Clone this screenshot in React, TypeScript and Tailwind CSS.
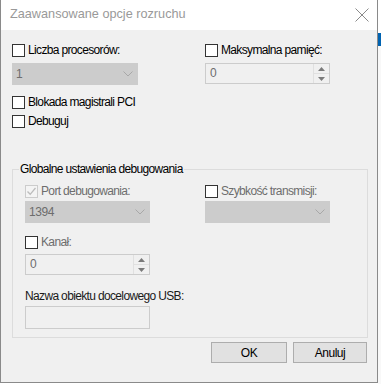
import { ReactNode } from 'react';

const font = { fontFamily: '"Liberation Sans", Arial, sans-serif' };

function Check({ label, disabled, checked }: { label: string; disabled?: boolean; checked?: boolean }) {
  return (
    <div className="flex items-center h-[14px]">
      <span
        className={`w-[13px] h-[13px] border flex items-center justify-center ${
          disabled && checked ? 'border-[#cccccc] bg-[#f4f4f4]' : 'border-[#333333] bg-white'
        }`}
      >
        {checked && (
          <svg width="11" height="11" viewBox="0 0 11 11">
            <path d="M1.5 5.5 L4.2 8.3 L9.5 2" fill="none" stroke="#bcbcbc" strokeWidth="1.3" />
          </svg>
        )}
      </span>
      <span className={`ml-[3px] text-[12px] leading-[14px] tracking-[-0.65px] ${disabled ? 'text-[#6d6d6d]' : 'text-black'}`}>
        {label}
      </span>
    </div>
  );
}

function Combo({ value, width }: { value: string; width: string }) {
  return (
    <div className={`${width} h-[22px] bg-[#cccccc] border border-[#cccccc] flex items-center justify-between pl-[3px] pr-[4px]`}>
      <span className="text-[12px] leading-[14px] tracking-[-0.4px] text-[#6d6d6d]">{value}</span>
      <svg width="10" height="6" viewBox="0 0 10 6">
        <path d="M0.5 0.5 L5 5 L9.5 0.5" fill="none" stroke="#a8a8a8" strokeWidth="1" />
      </svg>
    </div>
  );
}

function Spin({ value }: { value: string }) {
  return (
    <div className="w-[125px] h-[21px] bg-[#f0f0f0] border border-[#cccccc] flex">
      <span className="flex-1 pl-[4px] text-[12px] leading-[19px] text-[#6d6d6d]">{value}</span>
      <div className="w-[16px] flex flex-col border-l border-[#e0e0e0]">
        <div className="flex-1 flex items-center justify-center border-b border-[#e0e0e0]">
          <svg width="7" height="4" viewBox="0 0 7 4"><path d="M0 4 L3.5 0 L7 4 Z" fill="#7a7a7a" /></svg>
        </div>
        <div className="flex-1 flex items-center justify-center">
          <svg width="7" height="4" viewBox="0 0 7 4"><path d="M0 0 L3.5 4 L7 0 Z" fill="#7a7a7a" /></svg>
        </div>
      </div>
    </div>
  );
}

function Btn({ children, width }: { children: ReactNode; width: string }) {
  return (
    <div className={`${width} h-[21px] bg-[#e1e1e1] border border-[#adadad] flex items-center justify-center text-[12px] tracking-[-0.5px] text-black`}>
      {children}
    </div>
  );
}

export default function App() {
  return (
    <div className="w-[381px] h-[384px] flex bg-white overflow-hidden" style={font}>
      <div className="w-[378px] h-[383px] flex flex-col border-l border-r border-b border-[#8a8a8a] bg-[#f0f0f0] shrink-0">
        <div className="h-[30px] bg-white flex items-center justify-between pl-[9px] pr-[8px]">
          <span className="text-[12.7px] text-[#999999]">Zaawansowane opcje rozruchu</span>
          <svg width="14" height="14" viewBox="0 0 14 14">
            <path d="M0.5 0.5 L13.5 13.5 M13.5 0.5 L0.5 13.5" stroke="#8a8a8a" strokeWidth="1" />
          </svg>
        </div>

        <div className="flex flex-col pl-[11px] pt-[13px]">
          <div className="flex">
            <div className="w-[193px]">
              <Check label="Liczba procesorów:" />
              <div className="mt-[6px]">
                <Combo value="1" width="w-[126px]" />
              </div>
            </div>
            <div>
              <Check label="Maksymalna pamięć:" />
              <div className="mt-[6px]">
                <Spin value="0" />
              </div>
            </div>
          </div>

          <div className="mt-[10px]">
            <Check label="Blokada magistrali PCI" />
          </div>
          <div className="mt-[5px]">
            <Check label="Debuguj" />
          </div>

          <fieldset className="mt-[34px] w-[356px] border border-[#dcdcdc]">
            <legend className="ml-[6px] px-[1px] text-[12px] leading-[14px] tracking-[-0.65px] text-black">
              Globalne ustawienia debugowania
            </legend>
            <div className="pl-[12px] pt-[8px] pb-[8px] flex flex-col">
              <div className="flex">
                <div className="w-[180px]">
                  <Check label="Port debugowania:" disabled checked />
                  <div className="mt-[3px]">
                    <Combo value="1394" width="w-[125px]" />
                  </div>
                </div>
                <div>
                  <Check label="Szybkość transmisji:" disabled />
                  <div className="mt-[3px]">
                    <Combo value="" width="w-[125px]" />
                  </div>
                </div>
              </div>
              <div className="mt-[12px]">
                <Check label="Kanał:" disabled />
              </div>
              <div className="mt-[5px]">
                <Spin value="0" />
              </div>
              <div className="mt-[14px] text-[12px] leading-[14px] tracking-[-0.65px] text-[#1a1a1a]">
                Nazwa obiektu docelowego USB:
              </div>
              <div className="mt-[3px] w-[125px] h-[23px] bg-[#f0f0f0] border border-[#cccccc]" />
            </div>
          </fieldset>
        </div>

        <div className="flex justify-end gap-[6px] pr-[10px] mt-[4px]">
          <Btn width="w-[76px]">OK</Btn>
          <Btn width="w-[74px]">Anuluj</Btn>
        </div>
      </div>
      <div className="flex-1 flex flex-col">
        <div className="h-[33px]" />
        <div className="h-[13px] bg-[#0063b1]" />
        <div className="flex-1 bg-[#f8f8f8]" />
      </div>
    </div>
  );
}
